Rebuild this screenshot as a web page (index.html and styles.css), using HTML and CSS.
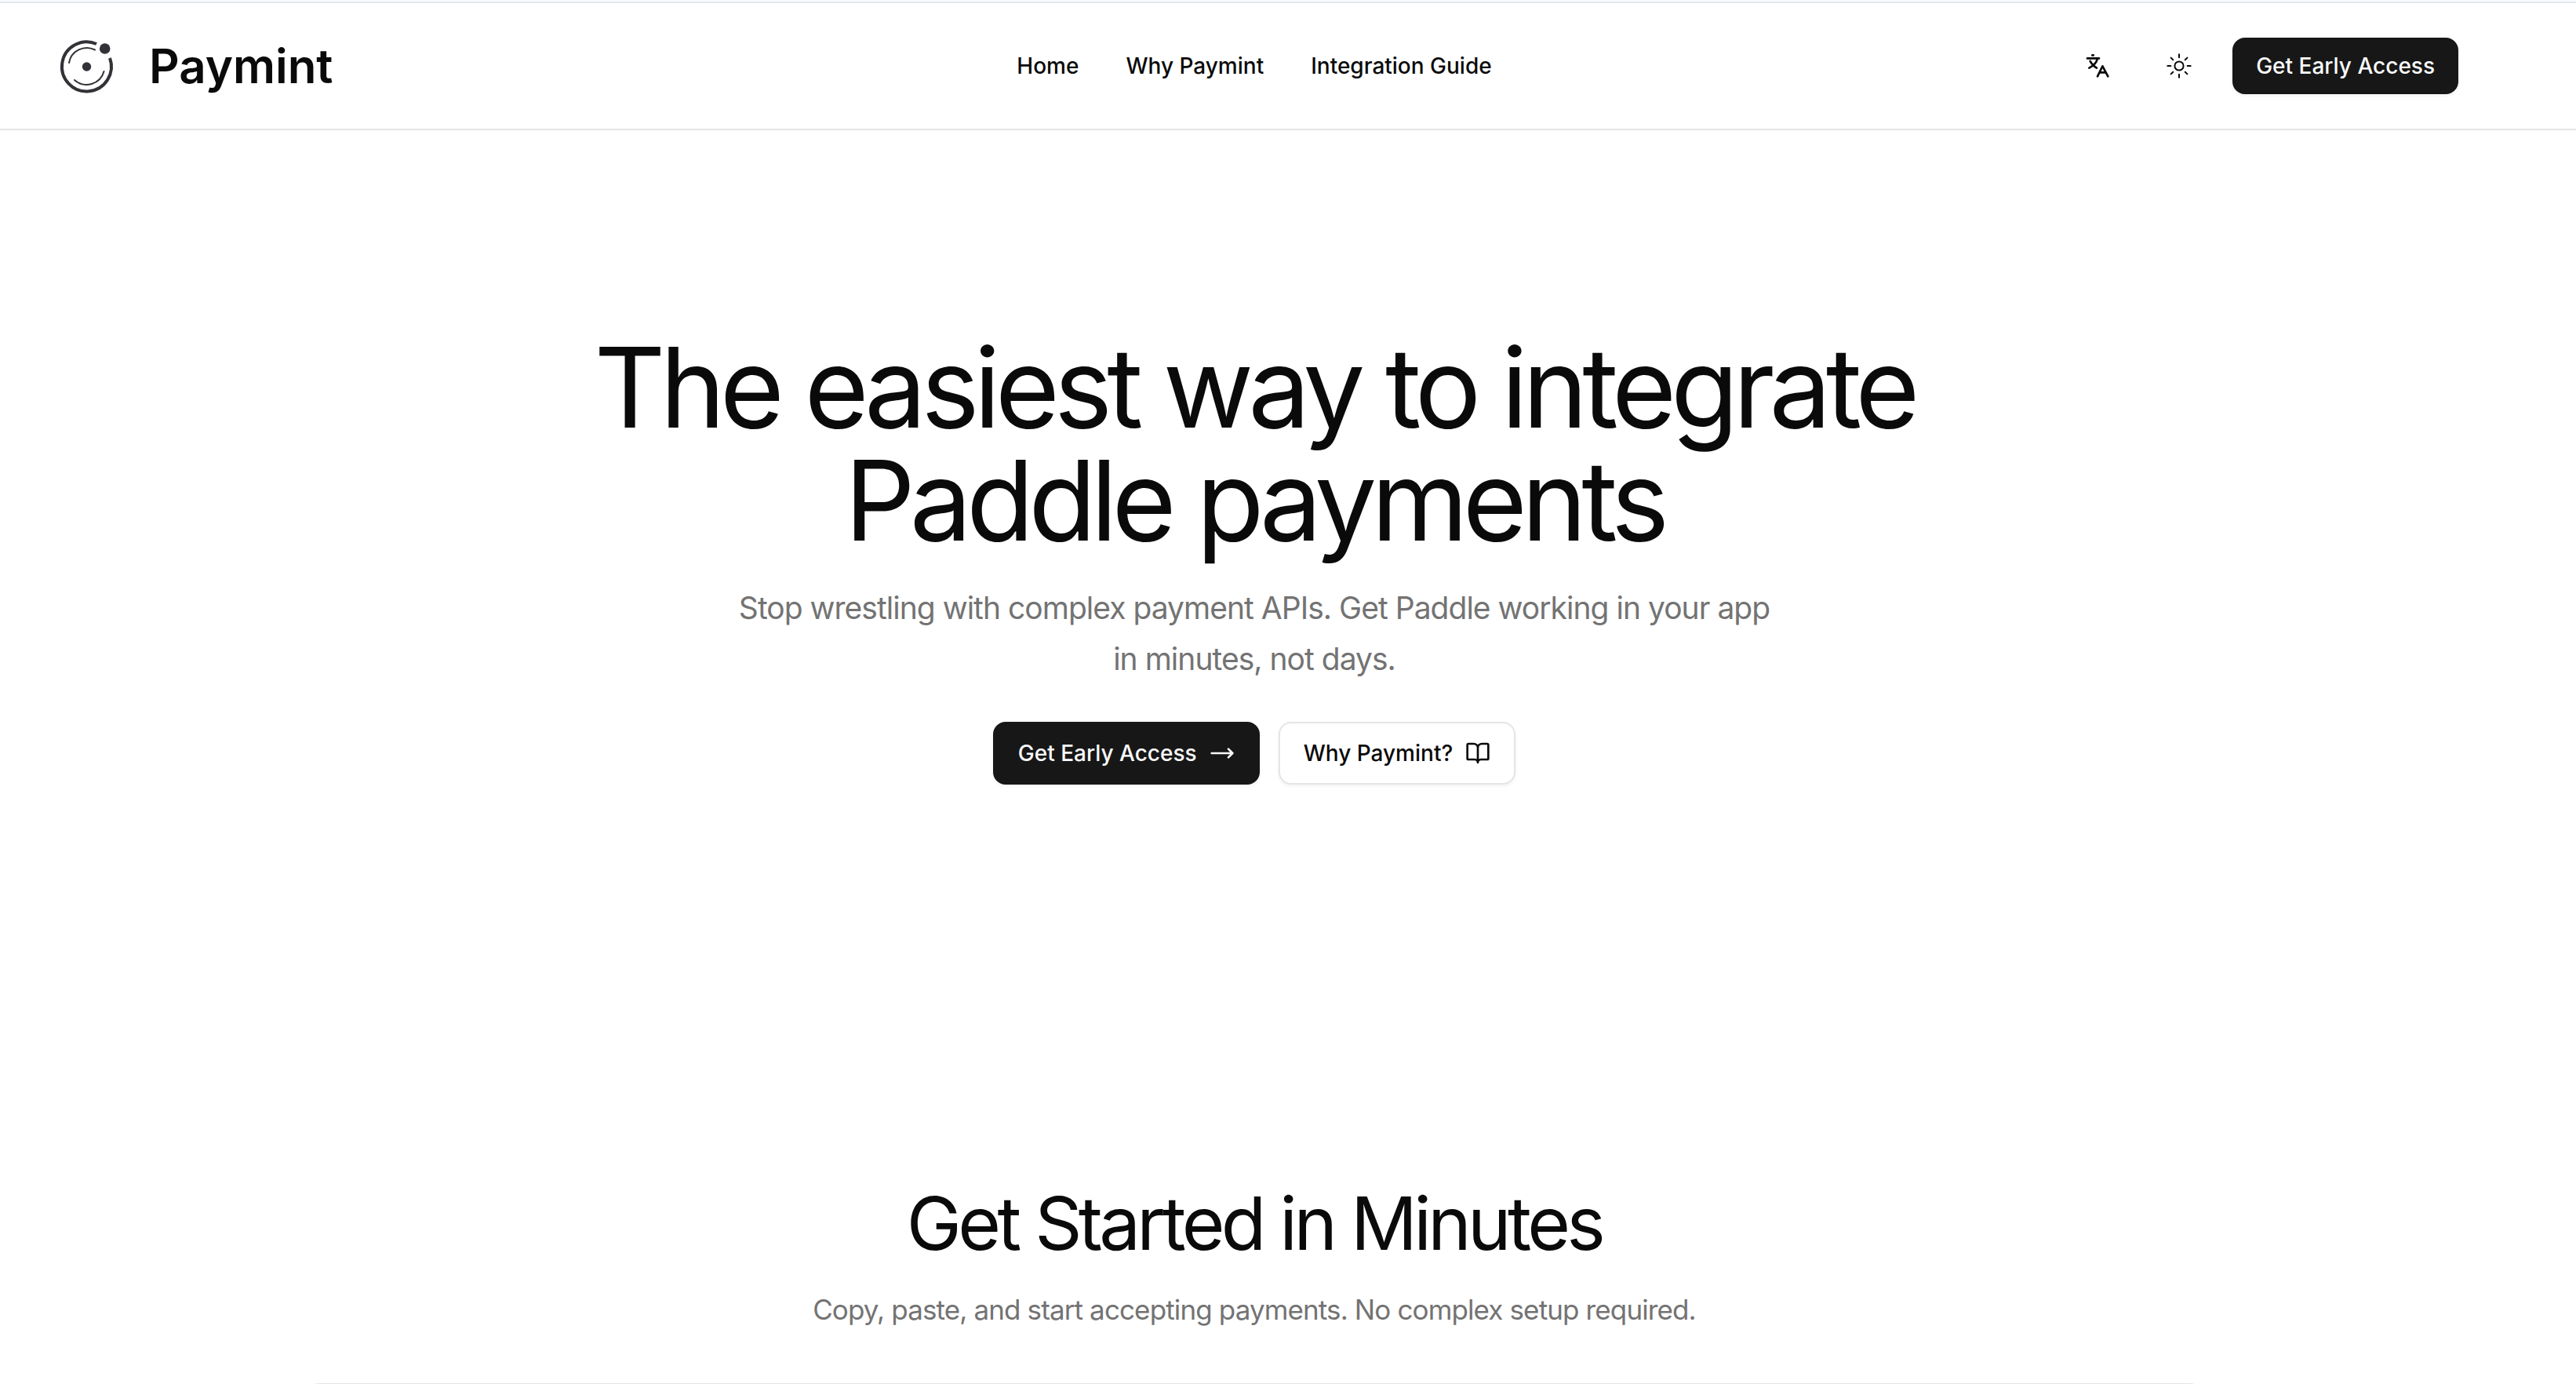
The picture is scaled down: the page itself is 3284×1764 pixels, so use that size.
FILE: index.html
```html
<!DOCTYPE html>
<html lang="en">
<head>
<meta charset="utf-8">
<meta name="viewport" content="width=device-width, initial-scale=1">
<title>Paymint</title>
<link rel="stylesheet" href="styles.css">
</head>
<body>
<header class="site-header">
  <a class="brand" href="#">
    <svg class="brand-mark" viewBox="0 0 92 92" aria-hidden="true">
      <g fill="none" stroke="#323237" stroke-linecap="round">
        <path stroke-width="4" stroke-linecap="butt" d="M59 18A31.5 31.5 0 1 0 76 36"/>
        <path stroke-width="2" d="M24 42A23 23 0 0 1 57 25.500"/>
        <path stroke-width="2" d="M31 64A23 23 0 0 0 68.500 53"/>
      </g>
      <circle cx="46.500" cy="47" r="5.700" fill="#323237"/>
      <circle cx="69.700" cy="24" r="6.800" fill="#323237"/>
    </svg>
    <span>Paymint</span>
  </a>
  <nav class="main-nav" aria-label="Main">
    <a href="#">Home</a>
    <a href="#why">Why Paymint</a>
    <a href="#guide">Integration Guide</a>
  </nav>
  <div class="header-actions">
    <button class="icon-button" type="button" aria-label="Change language">
      <svg class="icon icon-line" viewBox="0 0 24 24" aria-hidden="true"><path d="M7 1.800h1M2.200 4.800h11.300M12 5C11 9 8 12 4 14M5 7.500c1.500 3 3.600 5 6.200 6.500M12 22l4.800-9.800L22 22M13.800 18.300h6.200"/></svg>
    </button>
    <button class="icon-button" type="button" aria-label="Toggle theme">
      <svg class="icon icon-line icon-thin" viewBox="0 0 24 24" aria-hidden="true"><circle cx="12" cy="12" r="4.200"/><path d="M12 1v3M12 20v3M1 12h3M20 12h3M4.200 4.200l2 2M17.800 17.800l2 2M4.200 19.800l2-2M17.800 6.200l2-2"/></svg>
    </button>
    <button class="button button-primary" type="button">Get Early Access</button>
  </div>
</header>
<main class="content">
  <section class="hero">
    <h1>The easiest way to integrate Paddle payments</h1>
    <p class="hero-text">Stop wrestling with complex payment APIs. Get Paddle working in your app in minutes, not days.</p>
    <div class="hero-actions">
      <button class="button button-large button-primary" type="button">Get Early Access
        <svg class="icon icon-line" viewBox="0 0 24 24" aria-hidden="true"><path d="M18 8l4 4-4 4M2 12h20"/></svg>
      </button>
      <a class="button button-large button-outline" href="#why">Why Paymint?
        <svg class="icon icon-line" viewBox="0 0 24 24" aria-hidden="true"><path d="M12 7v14M3 18a1 1 0 0 1-1-1V4a1 1 0 0 1 1-1h5a4 4 0 0 1 4 4 4 4 0 0 1 4-4h5a1 1 0 0 1 1 1v13a1 1 0 0 1-1 1h-6a3 3 0 0 0-3 3 3 3 0 0 0-3-3z"/></svg>
      </a>
    </div>
  </section>
  <section class="start" id="guide">
    <h2>Get Started in Minutes</h2>
    <p class="start-text">Copy, paste, and start accepting payments. No complex setup required.</p>
    <div class="card"></div>
  </section>
</main>
</body>
</html>
```
FILE: styles.css
```css
* {
  box-sizing: border-box;
}

body {
  display: flex;
  flex-direction: column;
  height: 100vh;
  margin: 0;
  background: #fff;
  color: #0a0a0a;
  font-family: Inter, "Liberation Sans", sans-serif;
}

h1,
h2,
p {
  margin: 0;
  font-weight: 400;
}

a {
  color: inherit;
  text-decoration: none;
}

.site-header {
  display: grid;
  flex: none;
  grid-template-columns: 1fr auto 1fr;
  align-items: center;
  height: 166px;
  padding: 4px 150px 0 64px;
  border-bottom: 2px solid #e5e5e5;
  background: linear-gradient(#f8fafc 2px, #e2e8f0 2px 4px, #fff 4px);
}

.brand {
  display: flex;
  align-items: center;
  gap: 34px;
  font-size: 60px;
  font-weight: 600;
}

.brand-mark {
  width: 92px;
  height: 92px;
}

.main-nav {
  display: flex;
  gap: 60px;
  font-size: 28px;
  font-weight: 500;
}

.header-actions {
  display: flex;
  justify-content: flex-end;
  align-items: center;
  gap: 32px;
}

.icon-button {
  display: flex;
  justify-content: center;
  align-items: center;
  width: 72px;
  height: 72px;
  padding: 0;
  border: 0;
  background: none;
  color: inherit;
}

.icon {
  width: 32px;
  height: 32px;
}

.icon-line {
  fill: none;
  stroke: currentColor;
  stroke-width: 2;
  stroke-linecap: round;
  stroke-linejoin: round;
}

.icon-thin {
  stroke-width: 1.5;
}

.button {
  display: flex;
  align-items: center;
  gap: 16px;
  height: 72px;
  padding: 0 28px;
  border: 2px solid transparent;
  border-radius: 16px;
  font: inherit;
  font-size: 28px;
  font-weight: 500;
  white-space: nowrap;
  box-shadow: 0 2px 4px rgb(0 0 0 / 6%);
}

.button-large {
  height: 80px;
  padding: 0 30px;
}

.button-primary {
  border-color: #171717;
  background: #171717;
  color: #fafafa;
}

.button-outline {
  border-color: #e5e5e5;
  background: #fff;
}

.content {
  flex: 1;
  min-height: 0;
  padding: 0 150px 0 64px;
  overflow-y: auto;
  scrollbar-width: none;
}

.hero,
.start {
  display: flex;
  flex-direction: column;
  align-items: center;
  text-align: center;
}

.hero {
  padding: 256px 0;
}

h1 {
  max-width: 1792px;
  font-size: 141px;
  line-height: 144px;
  letter-spacing: -0.05em;
}

.hero-text {
  max-width: 1344px;
  margin-top: 32px;
  color: #737373;
  font-size: 39px;
  line-height: 65px;
  letter-spacing: -0.025em;
}

.hero-actions {
  display: flex;
  gap: 24px;
  margin-top: 48px;
}

.start {
  padding-top: 255px;
}

h2 {
  font-size: 94px;
  line-height: 96px;
  letter-spacing: -0.05em;
}

.start-text {
  margin-top: 32px;
  color: #737373;
  font-size: 35px;
  line-height: 60px;
  letter-spacing: -0.025em;
}

.card {
  width: 100%;
  max-width: 2432px;
  height: 640px;
  margin-top: 64px;
  border: 2px solid #e5e5e5;
  border-radius: 24px;
}
```
